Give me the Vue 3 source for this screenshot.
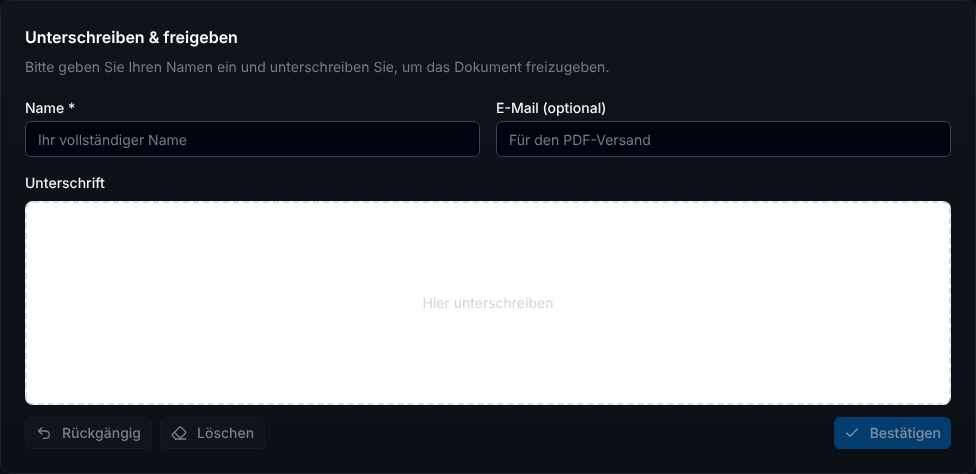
<template>
  <div class="card">
    <h2 class="title">Unterschreiben &amp; freigeben</h2>
    <p class="desc">Bitte geben Sie Ihren Namen ein und unterschreiben Sie, um das Dokument freizugeben.</p>

    <div class="fields">
      <div class="field">
        <label for="name">Name *</label>
        <input id="name" v-model="name" type="text" placeholder="Ihr vollständiger Name" />
      </div>
      <div class="field">
        <label for="email">E-Mail (optional)</label>
        <input id="email" v-model="email" type="email" placeholder="Für den PDF-Versand" />
      </div>
    </div>

    <div class="sign-label">Unterschrift</div>
    <div class="pad">
      <span>Hier unterschreiben</span>
    </div>

    <div class="actions">
      <div class="left">
        <button class="btn" disabled>
          <svg viewBox="0 0 24 24"><path d="M9 14 4 9l5-5" /><path d="M4 9h10.5a5.5 5.5 0 0 1 5.5 5.5a5.5 5.5 0 0 1-5.5 5.5H11" /></svg>
          Rückgängig
        </button>
        <button class="btn" disabled>
          <svg viewBox="0 0 24 24"><path d="m7 21-4.3-4.3c-1-1-1-2.5 0-3.4l9.6-9.6c1-1 2.5-1 3.4 0l5.6 5.6c1 1 1 2.5 0 3.4L13 21" /><path d="M22 21H7" /><path d="m5 11 9 9" /></svg>
          Löschen
        </button>
      </div>
      <button class="btn primary" disabled>
        <svg viewBox="0 0 24 24"><path d="M20 6 9 17l-5-5" /></svg>
        Bestätigen
      </button>
    </div>
  </div>
</template>

<script setup>
import { ref } from 'vue'

const name = ref('')
const email = ref('')
</script>

<style scoped>
.card {
  box-sizing: border-box;
  width: 976px;
  height: 474px;
  padding: 24px;
  border: 1px solid #1c232d;
  border-radius: 12px;
  background: linear-gradient(#0e141a, #0b1017);
  font-family: Inter, "Liberation Sans", sans-serif;
  color: #fff;
  text-rendering: geometricPrecision;
  transform: translateZ(0);
}

.title {
  margin: 0;
  font-size: 16px;
  line-height: 24px;
  font-weight: 600;
}

.desc {
  margin: 9px 0 0;
  font-size: 14px;
  line-height: 20px;
  color: #777b82;
}

.fields {
  display: grid;
  grid-template-columns: 1fr 1fr;
  gap: 16px;
  margin-top: 21px;
}

.field label,
.sign-label {
  display: block;
  font-size: 14px;
  line-height: 20px;
  font-weight: 480;
  color: #f0f3f6;
}

.field input {
  box-sizing: border-box;
  display: block;
  width: 100%;
  height: 36px;
  margin-top: 2px;
  padding: 2px 12px 0;
  border: 1px solid #33435f;
  border-radius: 6px;
  background: #01040f;
  font-family: inherit;
  font-size: 14px;
  text-rendering: geometricPrecision;
  color: #fff;
  outline: none;
}

.field input::placeholder {
  color: #777b82;
  opacity: 1;
}

.sign-label {
  margin-top: 17px;
}

.pad {
  box-sizing: border-box;
  display: flex;
  align-items: center;
  justify-content: center;
  height: 204px;
  margin-top: 7px;
  border: 2px dashed #d9dce0;
  border-radius: 8px;
  background: #fff;
  font-size: 14px;
  color: #d4d4d4;
}

.actions {
  display: flex;
  justify-content: space-between;
  margin-top: 12px;
}

.left {
  display: flex;
  gap: 8px;
}

.btn {
  display: flex;
  align-items: center;
  gap: 10px;
  height: 32px;
  padding: 0 10px;
  border: 1px solid #171c24;
  border-radius: 6px;
  background: #10151c;
  font-family: inherit;
  font-size: 14px;
  font-weight: 500;
  color: #7a7e85;
  text-rendering: geometricPrecision;
}

.btn svg {
  width: 16px;
  height: 16px;
  fill: none;
  stroke: currentColor;
  stroke-width: 2;
  stroke-linecap: round;
  stroke-linejoin: round;
}

.primary {
  padding: 0 9px;
  border-color: #033d70;
  background: #033d70;
  color: #7f8f9f;
}
</style>

<style>
html, body {
  background: #0b1017;
}
</style>
